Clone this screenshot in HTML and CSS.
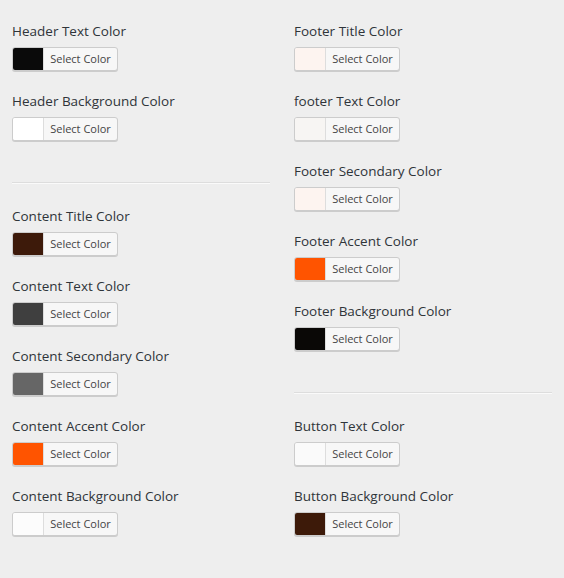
FILE: index.html
```html
<!DOCTYPE html>
<html>
<head>
<meta charset="utf-8">
<link rel="stylesheet" href="styles.css">
</head>
<body>
<div class="grid">
  <div class="col">
    <div class="field"><div class="label">Header Text Color</div><button class="picker"><span class="swatch" style="background:#0a0a0a"></span><span class="btn-text">Select Color</span></button></div>
    <div class="field"><div class="label">Header Background Color</div><button class="picker"><span class="swatch" style="background:#ffffff"></span><span class="btn-text">Select Color</span></button></div>
    <hr class="sep">
    <div class="field"><div class="label">Content Title Color</div><button class="picker"><span class="swatch" style="background:#3d1a0a"></span><span class="btn-text">Select Color</span></button></div>
    <div class="field"><div class="label">Content Text Color</div><button class="picker"><span class="swatch" style="background:#3f3f3f"></span><span class="btn-text">Select Color</span></button></div>
    <div class="field"><div class="label">Content Secondary Color</div><button class="picker"><span class="swatch" style="background:#666666"></span><span class="btn-text">Select Color</span></button></div>
    <div class="field"><div class="label">Content Accent Color</div><button class="picker"><span class="swatch" style="background:#ff5400"></span><span class="btn-text">Select Color</span></button></div>
    <div class="field"><div class="label">Content Background Color</div><button class="picker"><span class="swatch" style="background:#fcfcfc"></span><span class="btn-text">Select Color</span></button></div>
  </div>
  <div class="col">
    <div class="field"><div class="label">Footer Title Color</div><button class="picker"><span class="swatch" style="background:#fdf4f0"></span><span class="btn-text">Select Color</span></button></div>
    <div class="field"><div class="label">footer Text Color</div><button class="picker"><span class="swatch" style="background:#f7f5f3"></span><span class="btn-text">Select Color</span></button></div>
    <div class="field"><div class="label">Footer Secondary Color</div><button class="picker"><span class="swatch" style="background:#fdf4f0"></span><span class="btn-text">Select Color</span></button></div>
    <div class="field"><div class="label">Footer Accent Color</div><button class="picker"><span class="swatch" style="background:#ff5400"></span><span class="btn-text">Select Color</span></button></div>
    <div class="field"><div class="label">Footer Background Color</div><button class="picker"><span class="swatch" style="background:#0a0806"></span><span class="btn-text">Select Color</span></button></div>
    <hr class="sep">
    <div class="field"><div class="label">Button Text Color</div><button class="picker"><span class="swatch" style="background:#fafafa"></span><span class="btn-text">Select Color</span></button></div>
    <div class="field"><div class="label">Button Background Color</div><button class="picker"><span class="swatch" style="background:#3d1a09"></span><span class="btn-text">Select Color</span></button></div>
  </div>
</div>
</body>
</html>
```

FILE: styles.css
```css
html, body {
  margin: 0;
  padding: 0;
  background: #eeeeee;
}
body {
  padding: 21px 12px 0 12px;
  font-family: "Open Sans", "Noto Sans", sans-serif;
}
.grid {
  display: grid;
  grid-template-columns: 258px 258px;
  column-gap: 24px;
  align-items: start;
}
.col {
  display: flex;
  flex-direction: column;
}
.field {
  display: flex;
  flex-direction: column;
  align-items: flex-start;
  margin-bottom: 20px;
}
.label {
  font-size: 13.5px;
  line-height: 20px;
  height: 20px;
  color: #2f3439;
  margin-bottom: 6px;
  white-space: nowrap;
}
.picker {
  display: flex;
  align-items: stretch;
  height: 24px;
  width: 106px;
  padding: 0;
  margin: 0;
  border: 1px solid #cccccc;
  border-radius: 3px;
  background: #f7f7f7;
  box-shadow: 0 1px 0 #cccccc;
  box-sizing: border-box;
  overflow: hidden;
  cursor: pointer;
  font-family: inherit;
}
.swatch {
  display: block;
  width: 30px;
  flex: none;
  border-right: 1px solid #dddddd;
}
.btn-text {
  display: block;
  flex: 1;
  font-size: 11px;
  line-height: 22px;
  color: #444444;
  text-align: center;
}
.sep {
  margin: 21px 0 22px 0;
  height: 0;
  border: 0;
  border-top: 1px solid #dddddd;
  border-bottom: 1px solid #fafafa;
}
```
